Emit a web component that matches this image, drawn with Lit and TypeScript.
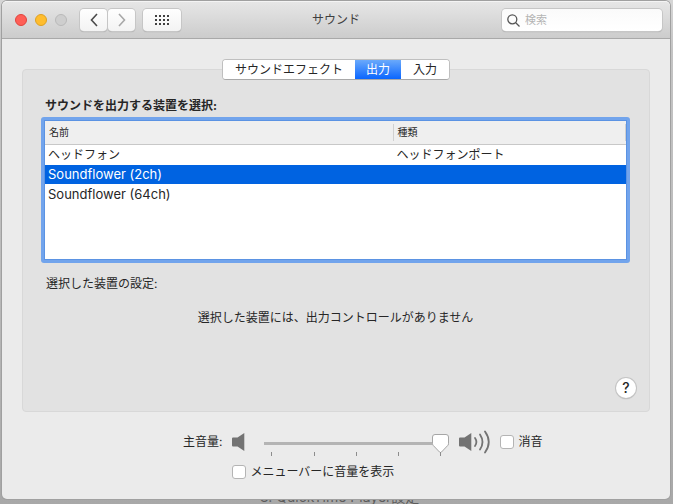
import { LitElement, html, css, svg } from "lit";
import { customElement, state } from "lit/decorators.js";
import { classMap } from "lit/directives/class-map.js";

interface Device {
  name: string;
  kind: string;
}

const TABS = ["サウンドエフェクト", "出力", "入力"];

const DEVICES: Device[] = [
  { name: "ヘッドフォン", kind: "ヘッドフォンポート" },
  { name: "Soundflower (2ch)", kind: "" },
  { name: "Soundflower (64ch)", kind: "" },
];

const dot = (x: number, y: number) => svg`<rect x=${x} y=${y} width="2" height="2" />`;

const control = css`
  button,
  input {
    font: inherit;
    color: inherit;
    margin: 0;
    padding: 0;
    box-sizing: border-box;
  }
  button {
    border: 0;
    display: flex;
    align-items: center;
    justify-content: center;
  }
`;

@customElement("title-bar")
class TitleBar extends LitElement {
  static styles = [
    control,
    css`
      :host {
        display: grid;
        grid-template-columns: 1fr auto 1fr;
        align-items: center;
        height: 38px;
        box-sizing: border-box;
        border-top: 1px solid #f4f4f4;
        border-bottom: 1px solid #a9a9a9;
        padding: 0 8px;
        border-radius: 5px 5px 0 0;
        background: linear-gradient(#e6e6e6, #cccccc);
        color: #404040;
      }
      .left {
        display: flex;
        align-items: center;
      }
      .lights {
        display: flex;
        gap: 8px;
        margin: 0 13px 0 5px;
      }
      .light {
        width: 12px;
        height: 12px;
        border-radius: 50%;
        border: 1px solid #e0443e;
        background: #ff5f57;
      }
      .light.min {
        border-color: #dea123;
        background: #ffbd2e;
      }
      .light.zoom {
        border-color: #b9b9b9;
        background: #cecece;
      }
      .tool {
        width: 27px;
        height: 22px;
        border-radius: 4px;
        background: linear-gradient(#fefefe, #f3f3f3);
        box-shadow: 0 0 0 1px #c6c6c6, 0 1px 1px #969696;
      }
      .tool.back {
        margin-right: 1px;
      }
      .tool.all {
        width: 38px;
        margin-left: 8px;
      }
      h1 {
        margin: 0;
        font-size: 12px;
        font-weight: 400;
      }
      .search {
        justify-self: end;
        display: flex;
        align-items: center;
        gap: 5px;
        width: 160px;
        height: 22px;
        box-sizing: border-box;
        padding: 0 5px;
        border-radius: 4px;
        background: linear-gradient(#fafafa, #ffffff);
        box-shadow: 0 0 0 1px #c6c6c6, 0 1px 1px #969696;
      }
      .search input {
        flex: 1;
        min-width: 0;
        border: 0;
        outline: 0;
        background: none;
        font-size: 11px;
      }
      .search input::placeholder {
        color: #b4b4b4;
      }
      svg {
        display: block;
      }
    `,
  ];

  render() {
    const dots = [0, 4, 8, 12].flatMap((x) => [0, 4, 8].map((y) => ({ x, y })));
    return html`
      <div class="left">
        <div class="lights">
          <button class="light close" aria-label="閉じる"></button>
          <button class="light min" aria-label="しまう"></button>
          <button class="light zoom" aria-label="拡大" disabled></button>
        </div>
        <button class="tool back" aria-label="戻る">
          <svg width="8" height="14" viewBox="0 0 8 14" fill="none" stroke="#4a4a4a" stroke-width="1.6">
            <path d="M7 1 1.500 7 7 13" />
          </svg>
        </button>
        <button class="tool next" aria-label="進む">
          <svg width="8" height="14" viewBox="0 0 8 14" fill="none" stroke="#a8a8a8" stroke-width="1.6">
            <path d="M1 1 6.500 7 1 13" />
          </svg>
        </button>
        <button class="tool all" aria-label="すべてを表示">
          <svg width="14" height="10" viewBox="0 0 14 10" fill="#404040">
            ${dots.map((d) => dot(d.x, d.y))}
          </svg>
        </button>
      </div>
      <h1>サウンド</h1>
      <label class="search">
        <svg width="13" height="13" viewBox="0 0 13 13" fill="none" stroke="#555" stroke-width="1.3">
          <circle cx="5.300" cy="5.300" r="4.500" />
          <path d="M8.500 8.500 12.500 12.500" />
        </svg>
        <input type="search" placeholder="検索" aria-label="検索" />
      </label>
    `;
  }
}

@customElement("device-table")
class DeviceTable extends LitElement {
  @state() private selected = 1;

  static styles = css`
    :host {
      display: block;
      box-sizing: border-box;
      min-height: 146px;
      border: 3px solid #72a4ec;
      border-radius: 3px;
      background: #fff;
      box-shadow: inset 0 0 0 1px #5b93e3;
      padding: 1px;
    }
    table {
      width: 100%;
      border-collapse: separate;
      border-spacing: 0;
      table-layout: fixed;
      font-size: 12px;
      color: #262626;
    }
    .name {
      width: 60%;
    }
    th {
      height: 23px;
      padding: 0;
      border-bottom: 1px solid #c8c8c8;
      background: #efefef;
      font-size: 10px;
      font-weight: 400;
      line-height: 17px;
      text-align: left;
    }
    th span {
      display: block;
      padding-left: 4px;
      border-right: 1px solid #d0d0d0;
    }
    td {
      height: 19px;
      padding: 0 3px;
      border-bottom: 1px solid #fff;
      background-clip: padding-box;
      line-height: 19px;
      white-space: nowrap;
    }
    td.latin {
      font-size: 13px;
    }
    .on td {
      background-color: #0063e1;
      color: #fff;
    }
  `;

  render() {
    return html`
      <table aria-label="サウンドを出力する装置">
        <thead>
          <tr>
            <th class="name" scope="col"><span>名前</span></th>
            <th scope="col"><span>種類</span></th>
          </tr>
        </thead>
        <tbody>
          ${DEVICES.map(
            (d, i) => html`
              <tr class=${classMap({ on: i === this.selected })} @click=${() => (this.selected = i)}>
                <td class=${classMap({ latin: /^[A-Z]/.test(d.name) })}>${d.name}</td>
                <td>${d.kind}</td>
              </tr>
            `
          )}
        </tbody>
      </table>
    `;
  }
}

@customElement("volume-slider")
class VolumeSlider extends LitElement {
  static styles = [
    control,
    css`
      :host {
        display: block;
        width: 185px;
      }
      input {
        display: block;
        width: 100%;
        height: 20px;
        appearance: none;
        background: linear-gradient(#b4b4b4, #b4b4b4) 0 8px / 100% 3px no-repeat;
      }
      input::-webkit-slider-thumb {
        appearance: none;
        width: 17px;
        height: 20px;
        background: url("data:image/svg+xml,%3Csvg xmlns='http://www.w3.org/2000/svg' width='17' height='20'%3E%3Cpath d='M3 .5H14Q16.500 .5 16.500 3V9.500Q16.500 10.500 15.800 11.400L9.500 18Q8.500 19 7.500 18L1.200 11.400Q.5 10.500 .5 9.500V3Q.5 .5 3 .5Z' fill='white' stroke='%23a6a6a6'/%3E%3C/svg%3E");
      }
      .ticks {
        display: flex;
        justify-content: space-between;
        padding: 0 8px 0 7px;
        margin-top: -2px;
      }
      .ticks span {
        width: 1px;
        height: 4px;
        background: #8c8c8c;
      }
    `,
  ];

  render() {
    return html`
      <input type="range" min="0" max="100" value="100" aria-label="主音量" />
      <div class="ticks"><span></span><span></span><span></span><span></span><span></span></div>
    `;
  }
}

@customElement("app-root")
class AppRoot extends LitElement {
  @state() private tab = 1;

  static styles = [
    control,
    css`
      :host {
        display: flex;
        position: relative;
        overflow: hidden;
        min-height: 100vh;
        box-sizing: border-box;
        padding: 1px 3px 5px 2px;
        font: 12px/20px Inter, "Noto Sans CJK JP", sans-serif;
        color: #262626;
        background:
          linear-gradient(90deg, #1c1b4b, #7a1f4b) 240px 0 / 267px 1px no-repeat,
          linear-gradient(90deg, #2aa5b4, #c8dede, #2aa5b4) 508px 0 / 24px 1px no-repeat,
          linear-gradient(#d6d6d6, #c4c4c4 10%, #bcbcbc 50%, #a8a8a8);
      }
      .behind {
        position: absolute;
        left: 260px;
        bottom: 0;
        font-size: 14px;
        line-height: 14px;
        color: #5c5c5c;
      }
      .window {
        position: relative;
        flex: 1;
        display: flex;
        flex-direction: column;
        min-width: 0;
        border-radius: 5px;
        background: #ebebeb;
        box-shadow: 0 0 0 1px #a0a0a0;
      }
      .body {
        flex: 1;
        display: flex;
        flex-direction: column;
        padding: 20px 20px 0;
      }
      .tabs {
        position: relative;
        display: flex;
        align-self: center;
        height: 21px;
        margin-bottom: -11px;
        border-radius: 4px;
        overflow: hidden;
        box-sizing: border-box;
        border: 1px solid #bfbfbf;
        border-bottom-color: #a8a8a8;
        background: #fff;
      }
      .tabs button {
        padding: 0 12px;
        background: #fff;
        line-height: 19px;
      }
      .tabs button.on {
        padding: 0 11px;
        background: linear-gradient(#6aa9fb, #0a66ff);
        color: #fff;
      }
      .panel {
        flex: 1;
        display: flex;
        flex-direction: column;
        padding: 26px 13px 13px 12px;
        border: 1px solid #d8d8d8;
        border-radius: 4px;
        background: #e2e2e2;
      }
      h2,
      p {
        margin: 0;
        font-size: 12px;
      }
      h2 {
        margin: 0 10px 1px;
        font-weight: 700;
      }
      device-table {
        margin: 0 6px;
      }
      .settings {
        margin: 11px 11px 0;
      }
      .message {
        margin-top: 14px;
        text-align: center;
      }
      .help {
        align-self: flex-end;
        width: 20px;
        height: 20px;
        margin-top: auto;
        border-radius: 50%;
        background: #fff;
        box-shadow: 0 0 0 1px #c4c4c4, 0 1px 1px #969696;
        font-size: 14px;
        font-weight: 500;
      }
      .footer {
        display: grid;
        grid-template-columns: 33% 1fr;
        column-gap: 10px;
        row-gap: 6px;
        align-items: center;
        padding: 18px 0 15px;
      }
      .caption {
        text-align: right;
      }
      .volume,
      .check {
        display: flex;
        align-items: center;
        height: 24px;
      }
      .volume volume-slider {
        margin: 5px 10px 0 19px;
      }
      .volume .check {
        margin-left: 10px;
      }
      .check {
        gap: 4px;
      }
      .second {
        grid-column: 2;
      }
      .check input {
        appearance: none;
        width: 14px;
        height: 14px;
        border: 1px solid #b4b4b4;
        border-radius: 3px;
        background: #fff;
      }
      .check input:checked {
        background: #0a66ff;
      }
      svg {
        display: block;
        flex: none;
      }
    `,
  ];

  render() {
    return html`
      <div class="behind">3. QuickTime Player設定</div>
      <main class="window">
        <title-bar></title-bar>
        <div class="body">
          <div class="tabs" role="tablist">
            ${TABS.map(
              (t, i) => html`<button
                role="tab"
                aria-selected=${i === this.tab}
                class=${classMap({ on: i === this.tab })}
                @click=${() => (this.tab = i)}
              >${t}</button>`
            )}
          </div>
          <section class="panel">
            <h2>サウンドを出力する装置を選択:</h2>
            <device-table></device-table>
            <p class="settings">選択した装置の設定:</p>
            <p class="message">選択した装置には、出力コントロールがありません</p>
            <button class="help" aria-label="ヘルプ">?</button>
          </section>
        </div>
        <div class="footer">
          <span class="caption">主音量:</span>
          <div class="volume">
            <svg width="13" height="18" viewBox="0 0 13 18" fill="#737373">
              <path d="M0 5.500Q0 4.500 1 4.500H5.500L12.300 0V18L5.500 13.500H1Q0 13.500 0 12.500Z" />
            </svg>
            <volume-slider></volume-slider>
            <svg width="31" height="24" viewBox="0 0 31 24" fill="#737373">
              <path d="M0 8.500Q0 7.500 1 7.500H5.500L12.300 3V21L5.500 16.500H1Q0 16.500 0 15.500Z" />
              <g fill="none" stroke="#737373" stroke-width="1.800" stroke-linecap="round">
                <path d="M16 8Q18.800 12 16 16" />
                <path d="M21 4.500Q26 12 21 19.500" />
                <path d="M26 1.500Q33.500 12 26 22.500" />
              </g>
            </svg>
            <label class="check"><input type="checkbox" />消音</label>
          </div>
          <label class="check second"><input type="checkbox" />メニューバーに音量を表示</label>
        </div>
      </main>
    `;
  }
}
